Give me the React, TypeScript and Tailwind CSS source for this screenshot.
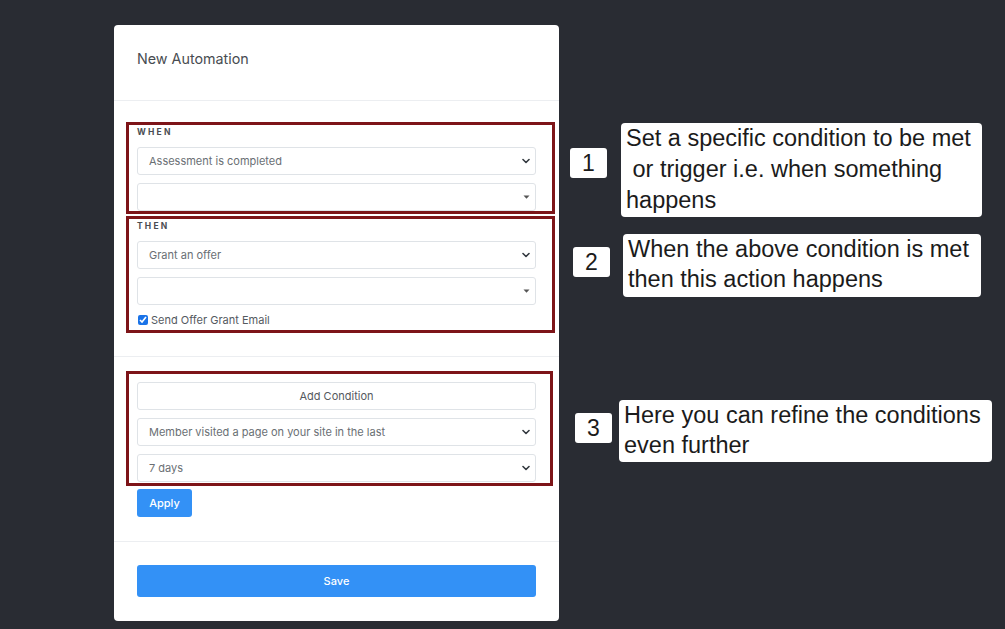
import React from 'react';

const RED = 'border-[3px] border-[#7d1418]';

const Chevron: React.FC = () => (
  <svg width="8" height="6" viewBox="0 0 8 6" aria-hidden="true">
    <path d="M1 1.5 4 4.5 7 1.5" fill="none" stroke="#343a40" strokeWidth="1.6" strokeLinecap="round" strokeLinejoin="round" />
  </svg>
);

const Caret: React.FC = () => (
  <svg width="7" height="4" viewBox="0 0 7 4" aria-hidden="true">
    <path d="M0.5 0.5h6L3.5 3.8z" fill="#555" />
  </svg>
);

const FakeSelect: React.FC<{ value?: string; caret?: boolean }> = ({ value, caret }) => (
  <div className="flex h-[28px] w-[399px] items-center justify-between rounded-[3px] border border-[#dfe3e7] bg-white pl-[11px] pr-[5px] text-[11px] text-[#6a6f74]">
    <span>{value}</span>
    {caret ? <Caret /> : <Chevron />}
  </div>
);

const SectionLabel: React.FC<{ children: React.ReactNode }> = ({ children }) => (
  <div className="mb-[9px] text-[8.5px] font-bold leading-[12px] tracking-[2.2px] text-[#4a4d52]">{children}</div>
);

const NumberTag: React.FC<{ n: string; className: string }> = ({ n, className }) => (
  <div
    className={`absolute flex h-[30px] w-[37px] items-center justify-center rounded-[3px] bg-white text-[23px] leading-none text-[#1b1b1b] ${className}`}
  >
    {n}
  </div>
);

export default function App() {
  return (
    <div
      className="relative h-[629px] w-[1005px] overflow-hidden bg-[#292c33]"
      style={{ fontFamily: 'Inter, "Noto Sans", sans-serif' }}
    >
      <div className="pl-[114px] pt-[25px]">
        <div className="w-[445px] rounded-[4px] bg-white">
          <div className="border-b border-[#eceef1] pb-[31px] pl-[23px] pt-[24px] text-[14.3px] leading-[20px] text-[#484c51]">
            New Automation
          </div>

          <div className="border-b border-[#eceef1] pb-[23px] pl-[12px] pt-[21px]">
            <div className={`w-[429px] ${RED} pl-[8px] pt-[1px]`}>
              <SectionLabel>WHEN</SectionLabel>
              <div className="flex flex-col gap-[8px]">
                <FakeSelect value="Assessment is completed" />
                <FakeSelect caret />
              </div>
            </div>
            <div className={`mt-[2px] w-[429px] ${RED} pb-[3px] pl-[8px] pt-[1px]`}>
              <SectionLabel>THEN</SectionLabel>
              <div className="flex flex-col gap-[8px]">
                <FakeSelect value="Grant an offer" />
                <FakeSelect caret />
              </div>
              <label className="mt-[8px] flex h-[14px] items-center gap-[3px] text-[11px] text-[#555a5f]">
                <input type="checkbox" defaultChecked className="ml-[1px] h-[10px] w-[10px] accent-[#1a73e8]" />
                Send Offer Grant Email
              </label>
            </div>
          </div>

          <div className="border-b border-[#eceef1] pb-[24px] pl-[12px] pt-[14px]">
            <div className={`w-[427px] ${RED} pb-[1px] pl-[8px] pt-[8px]`}>
              <div className="flex flex-col gap-[8px]">
                <button className="flex h-[28px] w-[399px] items-center justify-center rounded-[3px] border border-[#dfe3e7] bg-white text-[11px] text-[#55595e]">
                  Add Condition
                </button>
                <FakeSelect value="Member visited a page on your site in the last" />
                <FakeSelect value="7 days" />
              </div>
            </div>
            <button className="ml-[11px] mt-[3px] flex h-[28px] w-[55px] items-center justify-center rounded-[3px] bg-[#3391f6] text-[11px] font-medium text-white">
              Apply
            </button>
          </div>

          <div className="pb-[24px] pl-[23px] pt-[23px]">
            <button className="flex h-[32px] w-[399px] items-center justify-center rounded-[3px] bg-[#3391f6] text-[11px] font-medium text-white">
              Save
            </button>
          </div>
        </div>
      </div>

      <div style={{ fontFamily: '"Liberation Sans", Arial, sans-serif' }}>
        <NumberTag n="1" className="left-[570px] top-[148px]" />
        <div className="absolute left-[621px] top-[123px] h-[94px] w-[361px] whitespace-pre rounded-[4px] bg-white pl-[5px] text-[23.5px] leading-[31px] text-[#1b1b1b]">
          {'Set a specific condition to be met\n or trigger i.e. when something\nhappens'}
        </div>

        <NumberTag n="2" className="left-[573px] top-[247px]" />
        <div className="absolute left-[623px] top-[234px] h-[63px] w-[358px] whitespace-pre rounded-[4px] bg-white pl-[5px] text-[23.5px] leading-[30px] text-[#1b1b1b]">
          {'When the above condition is met\nthen this action happens'}
        </div>

        <NumberTag n="3" className="left-[575px] top-[413px]" />
        <div className="absolute left-[619px] top-[400px] h-[62px] w-[373px] whitespace-pre rounded-[4px] bg-white pl-[5px] text-[23.5px] leading-[30px] text-[#1b1b1b]">
          {'Here you can refine the conditions\neven further'}
        </div>
      </div>
    </div>
  );
}
